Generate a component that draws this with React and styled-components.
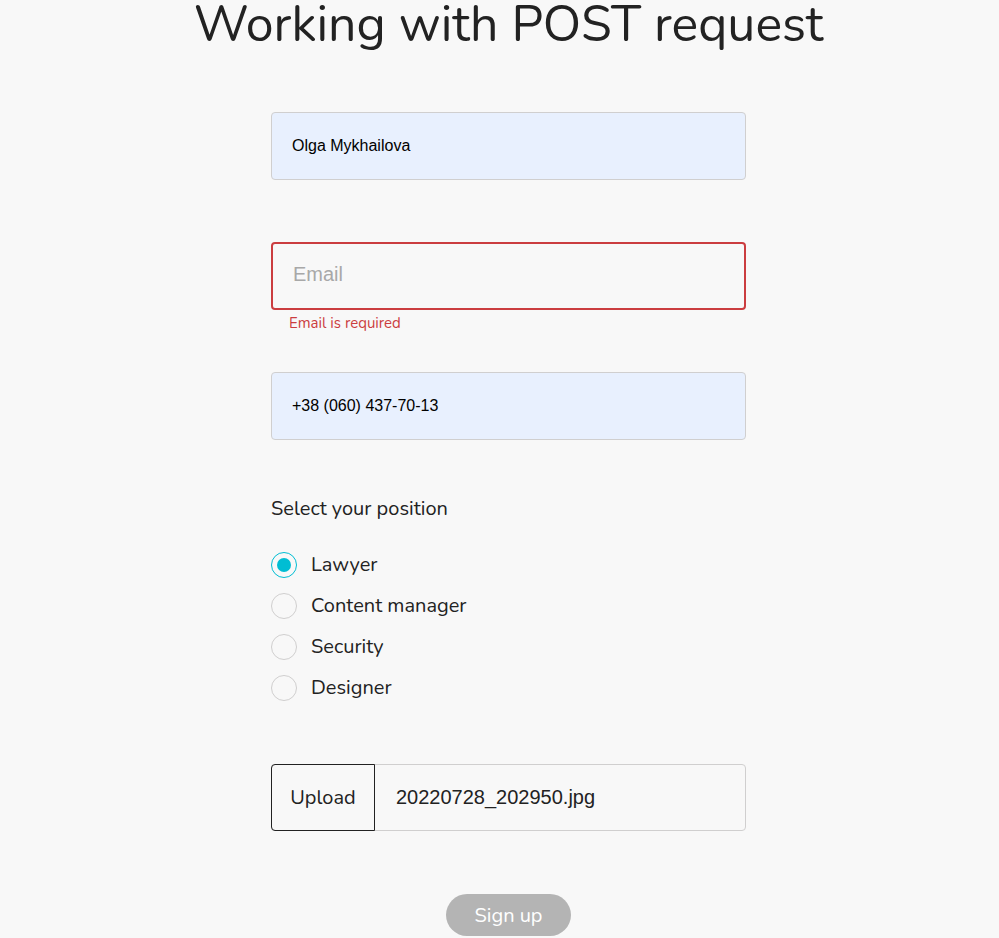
import styled, { createGlobalStyle } from "styled-components";

const GlobalStyle = createGlobalStyle`
	body {
		margin: 0;
		background: #f8f8f8;
		font-family: "Nunito", "Lato", sans-serif;
		color: rgba(0, 0, 0, 0.87);
	}
`;

const Page = styled.div`
	display: flex;
	flex-direction: column;
	align-items: center;
	padding-left: 18px;
	height: 938px;
	overflow: hidden;
`;
const Title = styled.h1`
	margin: 0;
	font-size: 50px;
	font-weight: 400;
	line-height: 50px;
	color: #222;
`;
const Form = styled.form`
	width: 475px;
	margin-top: 62px;
	display: flex;
	flex-direction: column;
`;
const Field = styled.div`
	margin-bottom: ${(p) => (p.$error ? "39px" : p.$last ? "56px" : "62px")};
`;
const Input = styled.input`
	box-sizing: border-box;
	width: 100%;
	height: 68px;
	padding: ${(p) => (p.$filled ? "0 20px" : "0 20px 3px")};
	border-radius: 4px;
	border: ${(p) => (p.$error ? "2px solid #cb3d40" : "1px solid #d0cfcf")};
	background: ${(p) => (p.$filled ? "#e8f0fe" : "transparent")};
	font-family: "Liberation Sans", Arial, sans-serif;
	font-size: ${(p) => (p.$filled ? "16px" : "20px")};
	color: #000;
	outline: none;
	&::placeholder {
		color: #a8a8a8;
	}
`;
const ErrorText = styled.div`
	margin: 3px 0 0 18px;
	font-size: 15px;
	line-height: 20px;
	color: #cb3d40;
`;
const Label = styled.div`
	font-size: 20px;
	line-height: 26px;
	color: #222;
	margin-bottom: 30px;
`;
const RadioList = styled.div`
	display: flex;
	flex-direction: column;
	gap: 15px;
`;
const RadioRow = styled.label`
	display: flex;
	align-items: center;
	gap: 14px;
	font-size: 20px;
	line-height: 26px;
	color: #222;
`;
const Circle = styled.span`
	box-sizing: border-box;
	width: 26px;
	height: 26px;
	border-radius: 50%;
	border: 1px solid ${(p) => (p.$checked ? "#00bdd3" : "#d0cfcf")};
	display: flex;
	align-items: center;
	justify-content: center;
	&::after {
		content: "";
		width: 14px;
		height: 14px;
		border-radius: 50%;
		background: #00bdd3;
		display: ${(p) => (p.$checked ? "block" : "none")};
	}
`;
const Upload = styled.div`
	margin-top: 63px;
	display: flex;
	height: 67px;
	border: 1px solid #d0cfcf;
	border-radius: 4px;
	box-sizing: border-box;
`;
const UploadButton = styled.div`
	box-sizing: border-box;
	width: 104px;
	margin: -1px 0 -1px -1px;
	border: 1px solid #222;
	border-radius: 4px 0 0 4px;
	display: flex;
	align-items: center;
	justify-content: center;
	font-size: 20px;
	color: #222;
`;
const FileName = styled.div`
	display: flex;
	align-items: center;
	padding-left: 21px;
	font-family: "Liberation Sans", Arial, sans-serif;
	font-size: 20px;
	color: #222;
`;
const Submit = styled.button`
	align-self: center;
	margin-top: 63px;
	width: 125px;
	height: 42px;
	border: none;
	border-radius: 80px;
	background: #b4b4b4;
	color: #fff;
	font-family: inherit;
	font-size: 20px;
`;

const positions = ["Lawyer", "Content manager", "Security", "Designer"];

export default function App() {
	return (
		<Page>
			<GlobalStyle />
			<Title>Working with POST request</Title>
			<Form>
				<Field>
					<Input $filled defaultValue="Olga Mykhailova" />
				</Field>
				<Field $error>
					<Input $error placeholder="Email" />
					<ErrorText>Email is required</ErrorText>
				</Field>
				<Field $last>
					<Input $filled defaultValue="+38 (060) 437-70-13" />
				</Field>
				<Label>Select your position</Label>
				<RadioList>
					{positions.map((p, i) => (
						<RadioRow key={p}>
							<Circle $checked={i === 0} />
							{p}
						</RadioRow>
					))}
				</RadioList>
				<Upload>
					<UploadButton>Upload</UploadButton>
					<FileName>20220728_202950.jpg</FileName>
				</Upload>
				<Submit type="button">Sign up</Submit>
			</Form>
		</Page>
	);
}
